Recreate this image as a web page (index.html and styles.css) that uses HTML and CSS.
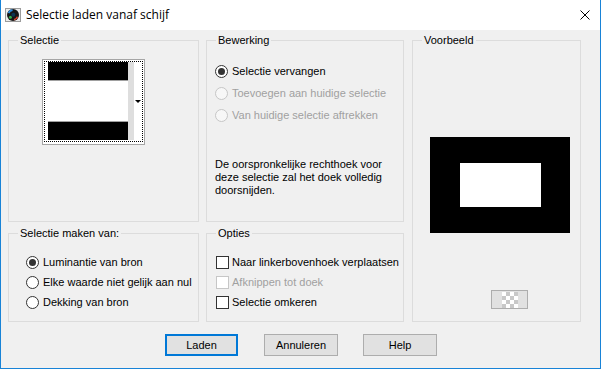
FILE: index.html
```html
<!DOCTYPE html>
<html lang="nl">
<head>
<meta charset="utf-8">
<title>Selectie laden vanaf schijf</title>
<link rel="stylesheet" href="styles.css">
</head>
<body>
<div class="window">
  <div class="titlebar">
    <svg class="app-icon" viewBox="0 0 16 16" aria-hidden="true">
      <rect x="0.5" y="1.5" width="15" height="13" fill="#ececec" stroke="#9c9c9c"/>
      <circle cx="8" cy="8" r="6" fill="#161616"/>
      <path d="M3.6 6.2 A4.8 4.8 0 0 1 7.6 3.2" stroke="#2f8fe0" stroke-width="1.8" fill="none"/>
      <path d="M12.4 9.8 A4.8 4.8 0 0 1 9 12.8" stroke="#d8402c" stroke-width="1.6" fill="none"/>
      <circle cx="5.4" cy="10.2" r="1.5" fill="#36b04a"/>
      <circle cx="8.3" cy="7.8" r="2" fill="#0d3552"/>
    </svg>
    <span class="title">Selectie laden vanaf schijf</span>
    <svg class="close" viewBox="0 0 10 10" aria-hidden="true">
      <path d="M0.5 0.5 L9.5 9.5 M9.5 0.5 L0.5 9.5" stroke="#000" stroke-width="1" fill="none"/>
    </svg>
  </div>

  <div class="body">
    <div class="groups">
      <fieldset class="group g-selectie">
        <legend>Selectie</legend>
        <div class="picker">
          <div class="focus">
            <div class="thumb">
              <div class="bar"></div>
              <div class="line"></div>
              <div class="blank"></div>
              <div class="line"></div>
              <div class="bar"></div>
            </div>
            <div class="strip"></div>
            <div class="drop"><span class="tri"></span></div>
          </div>
        </div>
      </fieldset>

      <fieldset class="group g-bewerking">
        <legend>Bewerking</legend>
        <div class="opts opts-wide">
          <div class="opt"><span class="radio checked"></span>Selectie vervangen</div>
          <div class="opt disabled"><span class="radio"></span>Toevoegen aan huidige selectie</div>
          <div class="opt disabled"><span class="radio"></span>Van huidige selectie aftrekken</div>
        </div>
        <p class="desc">De oorspronkelijke rechthoek voor<br>deze selectie zal het doek volledig<br>doorsnijden.</p>
      </fieldset>

      <fieldset class="group g-voorbeeld">
        <legend>Voorbeeld</legend>
        <div class="preview"><div class="preview-sel"></div></div>
        <div class="bg-btn"><span class="checker"></span></div>
      </fieldset>

      <fieldset class="group g-maken">
        <legend>Selectie maken van:</legend>
        <div class="opts">
          <div class="opt"><span class="radio checked"></span>Luminantie van bron</div>
          <div class="opt"><span class="radio"></span>Elke waarde niet gelijk aan nul</div>
          <div class="opt"><span class="radio"></span>Dekking van bron</div>
        </div>
      </fieldset>

      <fieldset class="group g-opties">
        <legend>Opties</legend>
        <div class="opts">
          <div class="opt cb"><span class="check"></span>Naar linkerbovenhoek verplaatsen</div>
          <div class="opt cb disabled"><span class="check"></span>Afknippen tot doek</div>
          <div class="opt cb"><span class="check"></span>Selectie omkeren</div>
        </div>
      </fieldset>
    </div>

    <div class="buttons">
      <button class="btn default" type="button">Laden</button>
      <button class="btn wide" type="button">Annuleren</button>
      <button class="btn wide" type="button">Help</button>
    </div>
  </div>
</div>
</body>
</html>
```

FILE: styles.css
```css
html, body {
  margin: 0;
  padding: 0;
  background: #f0f0f0;
}

body {
  font-family: "Liberation Sans", Arial, sans-serif;
  font-size: 11px;
  line-height: 13px;
  color: #000;
}

.window {
  width: 601px;
  height: 369px;
  box-sizing: border-box;
  border: 1px solid #1883d7;
  border-top: 0;
  background: #f0f0f0;
  display: flex;
  flex-direction: column;
}

/* Title bar */
.titlebar {
  height: 30px;
  flex: none;
  background: #fff;
  display: flex;
  align-items: center;
  padding-left: 4px;
  box-sizing: border-box;
  padding-bottom: 1px;
}

.app-icon {
  width: 16px;
  height: 16px;
  margin-right: 5px;
  flex: none;
}

.title {
  flex: 1;
  font-family: "Segoe UI", "Open Sans", "Noto Sans", sans-serif;
  font-size: 12px;
  line-height: 16px;
}

.close {
  width: 10px;
  height: 10px;
  margin-right: 10px;
  flex: none;
}

/* Body */
.body {
  flex: 1;
  padding: 4px 0 0 7px;
}

.groups {
  display: grid;
  grid-template-columns: 191px 198px 170px;
  grid-template-rows: 188px 95px;
  column-gap: 7px;
  row-gap: 5px;
}

.group {
  margin: 0;
  padding: 0;
  min-width: 0;
  border: 1px solid #dcdcdc;
  box-sizing: border-box;
}

.group legend {
  padding: 0 2px;
  margin-left: 9px;
  line-height: 13px;
}

.g-selectie { grid-column: 1; grid-row: 1; }
.g-bewerking { grid-column: 2; grid-row: 1; }
.g-voorbeeld { grid-column: 3; grid-row: 1 / span 2; margin-left: 1px; }
.g-maken { grid-column: 1; grid-row: 2; }
.g-opties { grid-column: 2; grid-row: 2; }

/* Selection picker */
.picker {
  margin: 12px 0 0 33px;
  width: 103px;
  height: 86px;
  box-sizing: border-box;
  border: 1px solid #a5a5a5;
  background: #fff;
  padding: 1px 1px 2px 1px;
  display: flex;
}

.focus {
  flex: 1;
  border: 1px dotted #000;
  padding: 0 0 1px 3px;
  display: flex;
}

.thumb {
  width: 80px;
  display: flex;
  flex-direction: column;
}

.thumb .bar {
  height: 18px;
  background: #000;
}

.thumb .line {
  height: 1px;
  background: #a0a0a0;
}

.thumb .blank {
  flex: 1;
  background: #fff;
}

.strip {
  width: 6px;
  background: #dedede;
}

.drop {
  flex: 1;
  display: flex;
  align-items: center;
  justify-content: center;
}

.tri {
  width: 0;
  height: 0;
  border-left: 3px solid transparent;
  border-right: 3px solid transparent;
  border-top: 3px solid #000;
}

/* Options */
.opts {
  margin-top: 12px;
  padding-left: 17px;
}

.opts-wide {
  margin-top: 13px;
  padding-left: 8px;
}

.g-opties .opts {
  padding-left: 9px;
}

.opt {
  height: 20px;
  display: flex;
  align-items: center;
  gap: 4px;
  white-space: nowrap;
}

.opts-wide .opt {
  height: 22px;
}

.opt.cb {
  gap: 3px;
}

.opt.disabled {
  color: #a0a0a0;
}

.radio {
  width: 13px;
  height: 13px;
  box-sizing: border-box;
  border: 1px solid #333;
  border-radius: 50%;
  background: #fff;
  flex: none;
  display: flex;
  align-items: center;
  justify-content: center;
}

.radio.checked::after {
  content: "";
  width: 7px;
  height: 7px;
  border-radius: 50%;
  background: #333;
}

.disabled .radio {
  border-color: #c6c6c6;
  background: #f7f7f7;
}

.check {
  width: 13px;
  height: 13px;
  box-sizing: border-box;
  border: 1px solid #333;
  background: #fff;
  flex: none;
}

.disabled .check {
  border-color: #c6c6c6;
  background: #fff;
}

.desc {
  margin: 32px 0 0 8px;
  line-height: 13px;
}

/* Preview */
.preview {
  margin: 90px 0 0 17px;
  width: 140px;
  height: 96px;
  background: #000;
  display: flex;
  align-items: center;
  justify-content: center;
}

.preview-sel {
  width: 81px;
  height: 44px;
  background: #fff;
}

.bg-btn {
  margin: 57px 0 0 78px;
  width: 37px;
  height: 19px;
  box-sizing: border-box;
  border: 1px solid #adadad;
  background: #e1e1e1;
  display: flex;
  align-items: center;
  justify-content: center;
}

.checker {
  width: 16px;
  height: 16px;
  background-image: conic-gradient(#c8c8c8 25%, #fff 0 50%, #c8c8c8 0 75%, #fff 0);
  background-size: 8px 8px;
}

/* Buttons */
.buttons {
  display: flex;
  gap: 26px;
  margin-top: 12px;
  padding-left: 157px;
}

.btn {
  width: 74px;
  height: 22px;
  box-sizing: border-box;
  border: 1px solid #adadad;
  background: #e1e1e1;
  font-family: "Liberation Sans", Arial, sans-serif;
  font-size: 11px;
  color: #000;
  padding: 0;
  margin: 0;
}

.btn.default {
  width: 73px;
  border: 2px solid #0078d7;
}

.btn.wide + .btn.wide {
  margin-left: -1px;
}
```
